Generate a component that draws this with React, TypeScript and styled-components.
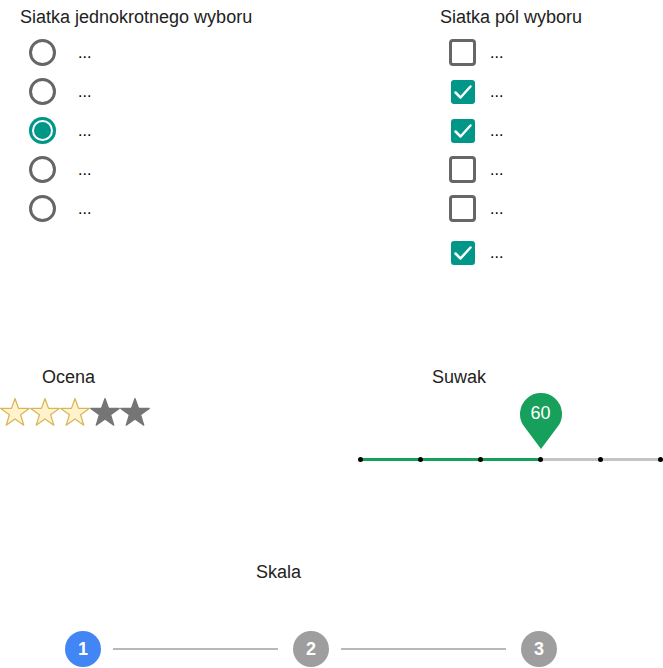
import React from 'react';
import styled, { createGlobalStyle } from 'styled-components';

const GlobalStyle = createGlobalStyle`
    html, body {
        margin: 0;
        padding: 0;
        background: #ffffff;
        overflow: hidden;
    }

    body {
        font-family: 'Liberation Sans', Arial, sans-serif;
        color: #1f1f1f;
    }
`;

const TEAL = '#009688';
const GREEN = '#17a05b';

const radios = [false, false, true, false, false];
const checks = [false, true, true, false, false, true];
const rating = 3;
const sliderValue = 60;
const sliderTicks = [0, 20, 40, 60, 80, 100];
const steps = [1, 2, 3];
const activeStep = 1;

const Star = ({ filled }: { filled: boolean }) => (
    <StarSvg viewBox="0 0 30 30" width="30" height="30">
        <polygon
            points="15,1.5 18.5,11.3 29.3,11.4 20.6,17.8 23.8,28.2 15,21.9 6.2,28.2 9.4,17.8 0.7,11.4 11.5,11.3"
            fill={filled ? '#fff2cc' : '#757575'}
            stroke={filled ? '#d6b656' : '#757575'}
            strokeWidth="1.2"
            strokeLinejoin="round"
        />
    </StarSvg>
);

const CheckMark = () => (
    <svg viewBox="0 0 24 24" width="24" height="24">
        <path d="M4.5 12.5 L9.5 17.5 L19.5 6.5" fill="none" stroke="#ffffff" strokeWidth="2.5" strokeLinecap="round" strokeLinejoin="round" />
    </svg>
);

const PinShape = ({ value }: { value: number }) => (
    <Pin style={{ left: `calc(2.5px + (100% - 5px) * ${value / 100})` }}>
        <svg viewBox="0 0 44 57" width="44" height="57">
            <path d="M22 57 L5.2 34.6 A21 21 0 1 1 38.8 34.6 Z" fill={GREEN} />
        </svg>
        <PinLabel>{value}</PinLabel>
    </Pin>
);

export default function App() {
    return (
        <Page>
            <GlobalStyle />
            <TopRow>
                <Section width={420} inset={20}>
                    <Title>Siatka jednokrotnego wyboru</Title>
                    <List>
                        {radios.map((checked, i) => (
                            <Row key={i}>
                                <Radio checked={checked} />
                                <Label gap={22}>...</Label>
                            </Row>
                        ))}
                    </List>
                </Section>
                <Section width={243} inset={20}>
                    <Title>Siatka pól wyboru</Title>
                    <List>
                        {checks.map((checked, i) => (
                            <Row key={i} $extra={i === checks.length - 1 ? 5 : 0}>
                                <CheckSlot>
                                    {checked ? (
                                        <CheckedBox>
                                            <CheckMark />
                                        </CheckedBox>
                                    ) : (
                                        <EmptyBox />
                                    )}
                                </CheckSlot>
                                <Label gap={14}>...</Label>
                            </Row>
                        ))}
                    </List>
                </Section>
            </TopRow>
            <MiddleRow>
                <Section width={358} inset={0}>
                    <Title indent={42}>Ocena</Title>
                    <Stars>
                        {[0, 1, 2, 3, 4].map((i) => (
                            <Star key={i} filled={i < rating} />
                        ))}
                    </Stars>
                </Section>
                <Section width={305} inset={0}>
                    <Title indent={74}>Suwak</Title>
                    <SliderBox>
                        <PinShape value={sliderValue} />
                        <Track $value={sliderValue}>
                            {sliderTicks.map((t) => (
                                <Tick key={t} />
                            ))}
                        </Track>
                    </SliderBox>
                </Section>
            </MiddleRow>
            <BottomRow>
                <Title indent={256}>Skala</Title>
                <Stepper>
                    {steps.map((n, i) => (
                        <React.Fragment key={n}>
                            {i > 0 && <StepLine />}
                            <StepCircle active={n === activeStep}>{n}</StepCircle>
                        </React.Fragment>
                    ))}
                </Stepper>
            </BottomRow>
        </Page>
    );
}

const Page = styled.div`
    width: 663px;
    height: 668px;
    display: flex;
    flex-direction: column;
`;

const TopRow = styled.div`
    display: flex;
    height: 360px;
`;

const MiddleRow = styled.div`
    display: flex;
    height: 195px;
`;

const BottomRow = styled.div`
    display: flex;
    flex-direction: column;
    padding-top: 8px;
`;

const Section = styled.div<{ width: number; inset: number }>`
    display: flex;
    flex-direction: column;
    box-sizing: border-box;
    width: ${({ width }) => `${width}px`};
    padding: ${({ inset }) => `8px 0 0 ${inset}px`};
`;

const Title = styled.div<{ indent?: number }>`
    font-size: 18px;
    line-height: 18px;
    color: #222222;
    padding-left: ${({ indent = 0 }) => `${indent}px`};
`;

const List = styled.div`
    display: flex;
    flex-direction: column;
    margin-top: 7px;
    padding-left: 9px;
`;

const Row = styled.div<{ $extra?: number }>`
    display: flex;
    align-items: center;
    height: 39px;
    margin-top: ${({ $extra = 0 }) => `${$extra}px`};
`;

const Label = styled.span<{ gap: number }>`
    margin-left: ${({ gap }) => `${gap}px`};
    font-size: 16px;
    line-height: 16px;
    color: #000000;
`;

const Radio = styled.span<{ checked: boolean }>`
    width: 27px;
    height: 27px;
    box-sizing: border-box;
    border-radius: 50%;
    border: ${({ checked }) => (checked ? 'none' : '3px solid #666666')};
    background: ${({ checked }) => (checked ? TEAL : '#ffffff')};
    box-shadow: ${({ checked }) => (checked ? `inset 0 0 0 3px ${TEAL}, inset 0 0 0 5px #ffffff` : 'none')};
`;

const CheckSlot = styled.span`
    width: 27px;
    height: 27px;
    display: flex;
    align-items: center;
    justify-content: center;
`;

const EmptyBox = styled.span`
    width: 27px;
    height: 27px;
    box-sizing: border-box;
    border: 3px solid #666666;
    border-radius: 4px;
`;

const CheckedBox = styled.span`
    width: 24px;
    height: 24px;
    border-radius: 3px;
    background: ${TEAL};
    display: flex;
    align-items: center;
    justify-content: center;
`;

const Stars = styled.div`
    display: flex;
    margin-top: 11px;
`;

const StarSvg = styled.svg`
    display: block;
`;

const SliderBox = styled.div`
    position: relative;
    height: 77px;
    display: flex;
    align-items: flex-end;
`;

const Track = styled.div<{ $value: number }>`
    position: relative;
    width: 100%;
    height: 5px;
    margin-bottom: 1px;
    display: flex;
    justify-content: space-between;
    align-items: center;

    &::before {
        content: '';
        position: absolute;
        left: 2.5px;
        right: 2.5px;
        top: 1px;
        height: 3px;
        background: ${({ $value }) =>
            `linear-gradient(90deg, ${GREEN} 0%, ${GREEN} ${$value}%, #c4c4c4 ${$value}%, #c4c4c4 100%)`};
    }
`;

const Tick = styled.span`
    position: relative;
    width: 5px;
    height: 5px;
    border-radius: 50%;
    background: #000000;
`;

const Pin = styled.div`
    position: absolute;
    top: 6px;
    width: 44px;
    height: 57px;
    transform: translateX(-50%);

    svg {
        display: block;
    }
`;

const PinLabel = styled.span`
    position: absolute;
    left: 0;
    right: 0;
    top: 11px;
    text-align: center;
    font-size: 18px;
    line-height: 20px;
    color: #ffffff;
`;

const Stepper = styled.div`
    display: flex;
    align-items: center;
    width: 492px;
    margin: 50px 0 0 65px;
`;

const StepLine = styled.span`
    flex: 1;
    height: 2px;
    background: #b8b8b8;
    margin: 0 15px 0 12px;
`;

const StepCircle = styled.span<{ active: boolean }>`
    width: 36px;
    height: 36px;
    flex: none;
    border-radius: 50%;
    background: ${({ active }) => (active ? '#4285f4' : '#9e9e9e')};
    color: #ffffff;
    font-size: 18px;
    font-weight: 700;
    display: flex;
    align-items: center;
    justify-content: center;
`;
